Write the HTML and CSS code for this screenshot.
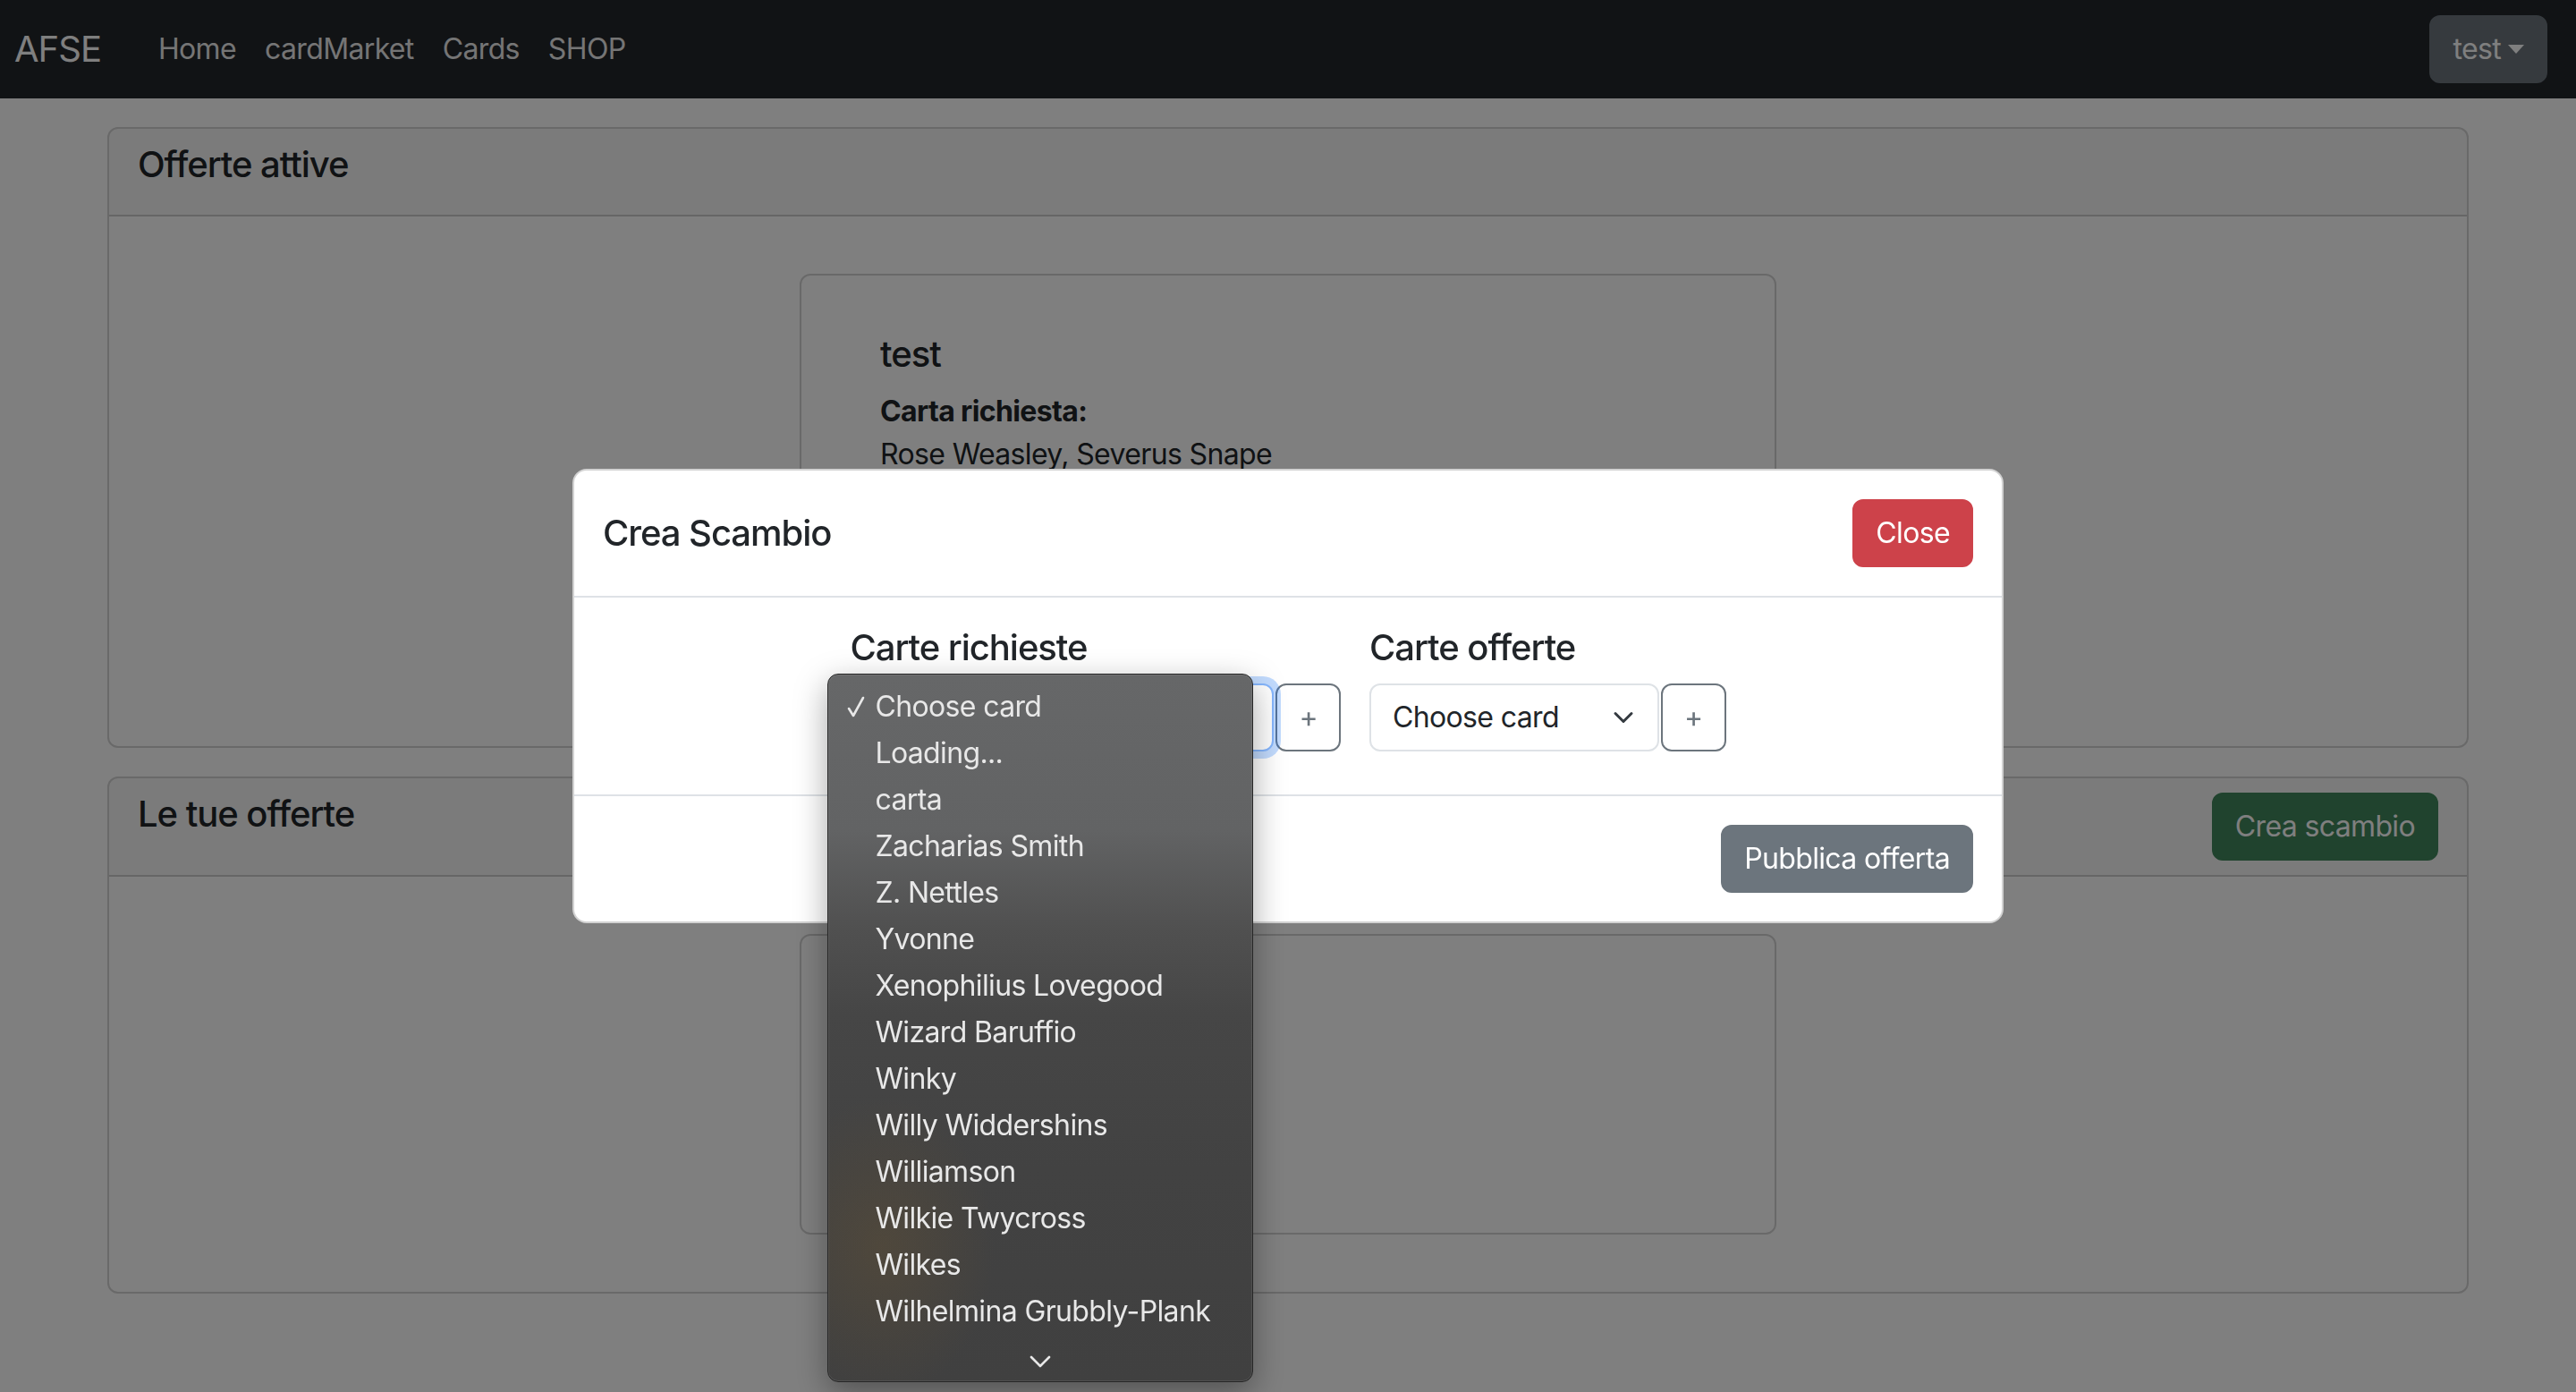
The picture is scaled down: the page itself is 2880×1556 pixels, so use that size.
FILE: index.html
```html
<!DOCTYPE html>
<html lang="it">
<head>
<meta charset="utf-8">
<title>AFSE - Scambi</title>
<link rel="stylesheet" href="styles.css">
</head>
<body>
<nav class="navbar">
  <div class="nav-left">
    <a class="brand" href="#">AFSE</a>
    <ul class="nav-links">
      <li><a href="#">Home</a></li>
      <li><a href="#">cardMarket</a></li>
      <li><a href="#">Cards</a></li>
      <li><a href="#">SHOP</a></li>
    </ul>
  </div>
  <button class="btn btn-secondary dropdown-toggle">test</button>
</nav>

<main class="container">
  <section class="card">
    <div class="card-header"><h5 class="title">Offerte attive</h5></div>
    <div class="card-body">
      <div class="offer-card offer-card-tall">
        <h5 class="title">test</h5>
        <p><strong>Carta richiesta:</strong><br>Rose Weasley, Severus Snape</p>
      </div>
    </div>
  </section>

  <section class="card">
    <div class="card-header card-header-split">
      <h5 class="title">Le tue offerte</h5>
      <button class="btn btn-success">Crea scambio</button>
    </div>
    <div class="card-body">
      <div class="offer-card offer-card-short"></div>
    </div>
  </section>
</main>

<div class="backdrop"></div>

<div class="modal-wrap">
  <div class="modal">
    <div class="modal-header">
      <h5 class="title">Crea Scambio</h5>
      <button class="btn btn-danger">Close</button>
    </div>
    <div class="modal-body">
      <div class="picker-row">
        <div class="picker">
          <h5 class="title">Carte richieste</h5>
          <div class="picker-controls">
            <div class="select-wrap select-wide">
              <div class="form-select is-focused"></div>
              <div class="select-popup">
                <div class="popup-item is-checked"><svg class="check" width="20" height="24" viewBox="0 0 20 24"><polyline points="2,14 7,22 18,2" fill="none" stroke="#e8e8e8" stroke-width="2.6" stroke-linecap="round" stroke-linejoin="round"/></svg>Choose card</div>
                <div class="popup-item">Loading...</div>
                <div class="popup-item">carta</div>
                <div class="popup-item">Zacharias Smith</div>
                <div class="popup-item">Z. Nettles</div>
                <div class="popup-item">Yvonne</div>
                <div class="popup-item">Xenophilius Lovegood</div>
                <div class="popup-item">Wizard Baruffio</div>
                <div class="popup-item">Winky</div>
                <div class="popup-item">Willy Widdershins</div>
                <div class="popup-item">Williamson</div>
                <div class="popup-item">Wilkie Twycross</div>
                <div class="popup-item">Wilkes</div>
                <div class="popup-item">Wilhelmina Grubbly-Plank</div>
                <div class="popup-more"><svg width="24" height="16" viewBox="0 0 24 16"><polyline points="2,3 12,13 22,3" fill="none" stroke="#e8e8e8" stroke-width="2.6" stroke-linecap="round" stroke-linejoin="round"/></svg></div>
              </div>
            </div>
            <button class="btn btn-outline-secondary">+</button>
          </div>
        </div>
        <div class="picker">
          <h5 class="title">Carte offerte</h5>
          <div class="picker-controls">
            <div class="select-wrap select-narrow">
              <div class="form-select">Choose card</div>
              <svg class="select-chevron" width="32" height="24" viewBox="0 0 16 16"><path d="m2 5 6 6 6-6" fill="none" stroke="#343a40" stroke-width="2" stroke-linecap="round" stroke-linejoin="round"/></svg>
            </div>
            <button class="btn btn-outline-secondary">+</button>
          </div>
        </div>
      </div>
    </div>
    <div class="modal-footer">
      <button class="btn btn-secondary">Pubblica offerta</button>
    </div>
  </div>
</div>
</body>
</html>
```

FILE: styles.css
```css
* { box-sizing: border-box; }

html, body {
  margin: 0;
  padding: 0;
}

body {
  font-family: Inter, "Liberation Sans", Arial, sans-serif;
  font-size: 32px;
  line-height: 1.5;
  letter-spacing: -0.02em;
  color: #212529;
  background: #ffffff;
  height: 1556px;
  overflow: hidden;
}

.title {
  margin: 0 0 16px 0;
  font-size: 40px;
  font-weight: 500;
  line-height: 1.2;
  letter-spacing: -0.026em;
}

p { margin: 0 0 16px 0; }
strong { font-weight: 700; }

/* Navbar */
.navbar {
  height: 110px;
  background: #23262b;
  display: flex;
  align-items: center;
  justify-content: space-between;
  padding: 0 32px 0 16px;
}

.nav-left {
  display: flex;
  align-items: center;
}

.brand {
  font-size: 40px;
  color: #ffffff;
  text-decoration: none;
  margin-right: 48px;
  line-height: 60px;
  letter-spacing: -0.025em;
}

.nav-links {
  display: flex;
  list-style: none;
  margin: 0;
  padding: 0;
}

.nav-links a {
  display: block;
  padding: 16px 16px;
  color: rgba(255, 255, 255, 0.92);
  text-decoration: none;
  font-size: 32px;
}

/* Buttons */
.btn {
  font-family: inherit;
  font-size: 32px;
  line-height: 48px;
  letter-spacing: -0.02em;
  padding: 12px 24px;
  border: 2px solid transparent;
  border-radius: 12px;
  cursor: pointer;
  color: #ffffff;
  background: transparent;
}

.btn-secondary { background: #6c757d; border-color: #6c757d; }
.btn-success { background: #40865c; border-color: #40865c; }
.btn-danger { background: #cd424a; border-color: #cd424a; }
.btn-outline-secondary {
  color: #6c757d;
  border-color: #6c757d;
  background: #ffffff;
}

.dropdown-toggle::after {
  content: "";
  display: inline-block;
  margin-left: 8px;
  vertical-align: 6px;
  border-top: 10px solid #ffffff;
  border-left: 9px solid transparent;
  border-right: 9px solid transparent;
}

/* Layout */
.container {
  width: 2640px;
  margin: 32px auto 0;
  display: flex;
  flex-direction: column;
  gap: 32px;
}

.card {
  border: 2px solid rgba(0, 0, 0, 0.175);
  border-radius: 12px;
  background: #ffffff;
}

.card-header {
  padding: 16px 32px;
  background: rgba(0, 0, 0, 0.03);
  border-bottom: 2px solid rgba(0, 0, 0, 0.175);
  border-radius: 10px 10px 0 0;
}

.card-header-split {
  display: flex;
  justify-content: space-between;
  align-items: flex-start;
}

.card-body {
  padding: 32px;
}

.offer-card {
  width: 1092px;
  margin: 32px auto;
  border: 2px solid rgba(0, 0, 0, 0.175);
  border-radius: 12px;
  padding: 64px 88px 32px;
}

.offer-card-tall { min-height: 464px; }
.offer-card-short { min-height: 336px; }

/* Backdrop + modal */
.backdrop {
  position: fixed;
  inset: 0;
  background: rgba(0, 0, 0, 0.5);
  z-index: 1040;
}

.modal-wrap {
  position: fixed;
  inset: 0;
  z-index: 1050;
  display: flex;
  align-items: center;
  justify-content: center;
}

.modal {
  width: 1600px;
  background: #ffffff;
  border: 2px solid rgba(0, 0, 0, 0.175);
  border-radius: 16px;
}

.modal-header {
  display: flex;
  align-items: center;
  justify-content: space-between;
  padding: 32px;
  border-bottom: 2px solid #dee2e6;
}

.modal-header .title { margin: 0; }

.modal-body {
  padding: 32px;
}

.modal-footer {
  display: flex;
  justify-content: flex-end;
  padding: 24px;
  border-top: 2px solid #dee2e6;
}

.modal-footer .btn { margin: 8px; }

.picker-row {
  display: flex;
  justify-content: center;
  gap: 32px;
}

.picker-controls {
  display: flex;
  gap: 2px;
  margin-bottom: 16px;
}

.select-wrap {
  position: relative;
}

.select-wide { width: 474px; }
.select-narrow { width: 324px; }

.form-select {
  display: block;
  width: 100%;
  font-size: 32px;
  line-height: 48px;
  height: 76px;
  padding: 12px 72px 12px 24px;
  color: #212529;
  background: #ffffff;
  border: 2px solid #dee2e6;
  border-radius: 12px;
  white-space: nowrap;
}

.form-select.is-focused {
  border-color: #86b7fe;
  box-shadow: 0 0 0 8px rgba(13, 110, 253, 0.25);
}

.select-chevron {
  position: absolute;
  right: 24px;
  top: 26px;
  pointer-events: none;
}

/* Native select popup */
.select-popup {
  position: absolute;
  left: -25px;
  top: -11px;
  width: 476px;
  height: 792px;
  padding-top: 10px;
  border: 1px solid #262626;
  border-radius: 12px;
  background:
    radial-gradient(ellipse 180px 240px at 60px 640px, rgba(115, 88, 45, 0.28), rgba(115, 88, 45, 0) 70%),
    linear-gradient(180deg, #666768 0%, #626364 22%, #505050 36%, #464646 48%, #424242 70%, #404040 100%);
  box-shadow: 0 12px 36px rgba(0, 0, 0, 0.35), inset 0 0 0 1px rgba(255, 255, 255, 0.08);
  z-index: 2;
}

.popup-item {
  position: relative;
  height: 52px;
  line-height: 52px;
  padding-left: 52px;
  font-size: 32px;
  color: #e8e8e8;
  white-space: nowrap;
}

.popup-item .check {
  position: absolute;
  left: 21px;
  top: 14px;
}

.popup-more {
  display: flex;
  justify-content: center;
  padding-top: 22px;
}
```
